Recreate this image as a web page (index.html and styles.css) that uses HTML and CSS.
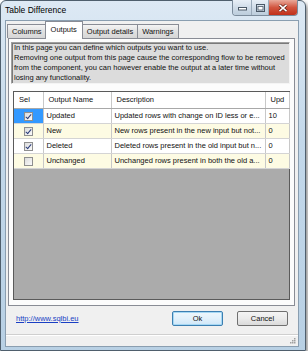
FILE: index.html
```html
<!DOCTYPE html>
<html lang="en">
<head>
    <meta charset="UTF-8">
    <title>Table Difference</title>
    <link rel="stylesheet" href="styles.css">
</head>
<body>
    <div class="window">
        <div class="titlebar">
            <span class="title">Table Difference</span>
            <div class="caption-buttons">
                <span class="cap cap-min">
                    <svg width="9" height="7" viewBox="0 0 9 7"><rect x="0.5" y="3.5" width="8" height="2.5" fill="#fff" stroke="#4a5866"/></svg>
                </span>
                <span class="cap cap-max">
                    <svg width="9" height="8" viewBox="0 0 9 8"><rect x="0.5" y="0.5" width="8" height="7" fill="none" stroke="#4a5866"/><rect x="2" y="2.5" width="5" height="3.5" fill="#fff" stroke="#4a5866" stroke-width="0.8"/></svg>
                </span>
                <span class="cap cap-close">
                    <svg width="10" height="8" viewBox="0 0 10 8"><path d="M1.5 0.8 L8.5 7.2 M8.5 0.8 L1.5 7.2" stroke="#5c1a10" stroke-width="3"/><path d="M1.5 0.8 L8.5 7.2 M8.5 0.8 L1.5 7.2" stroke="#fff" stroke-width="1.6"/></svg>
                </span>
            </div>
        </div>

        <div class="client">
            <div class="tabs">
                <span class="tab">Columns</span>
                <span class="tab active">Outputs</span>
                <span class="tab">Output details</span>
                <span class="tab">Warnings</span>
            </div>

            <div class="panel">
                <div class="info">
                    In this page you can define which outputs you want to use.<br>
                    Removing one output from this page cause the corresponding flow to be removed<br>
                    from the component, you can however enable the output at a later time without<br>
                    losing any functionality.
                </div>

                <div class="grid">
                    <table>
                        <colgroup>
                            <col class="col-sel">
                            <col class="col-name">
                            <col class="col-desc">
                            <col class="col-upd">
                        </colgroup>
                        <tr class="head">
                            <th>Sel</th>
                            <th>Output Name</th>
                            <th>Description</th>
                            <th>Upd</th>
                        </tr>
                        <tr>
                            <td class="sel selected"><span class="check on"></span></td>
                            <td>Updated</td>
                            <td>Updated rows with change on ID less or e...</td>
                            <td>10</td>
                        </tr>
                        <tr class="alt">
                            <td class="sel"><span class="check on"></span></td>
                            <td>New</td>
                            <td>New rows present in the new input but not...</td>
                            <td>0</td>
                        </tr>
                        <tr>
                            <td class="sel"><span class="check on"></span></td>
                            <td>Deleted</td>
                            <td>Deleted rows present in the old input but n...</td>
                            <td>0</td>
                        </tr>
                        <tr class="alt">
                            <td class="sel"><span class="check"></span></td>
                            <td>Unchanged</td>
                            <td>Unchanged rows present in both the old a...</td>
                            <td>0</td>
                        </tr>
                    </table>
                </div>
            </div>

            <div class="actions">
                <a class="link" href="#">http://www.sqlbi.eu</a>
                <button class="btn btn-default">Ok</button>
                <button class="btn">Cancel</button>
            </div>

            <div class="statusbar">
                <svg class="grip" width="7" height="7" viewBox="0 0 7 7">
                    <rect x="5" y="1" width="1.5" height="1.5" fill="#a0a0a0"/>
                    <rect x="3" y="3" width="1.5" height="1.5" fill="#a0a0a0"/>
                    <rect x="5" y="3" width="1.5" height="1.5" fill="#a0a0a0"/>
                    <rect x="1" y="5" width="1.5" height="1.5" fill="#a0a0a0"/>
                    <rect x="3" y="5" width="1.5" height="1.5" fill="#a0a0a0"/>
                    <rect x="5" y="5" width="1.5" height="1.5" fill="#a0a0a0"/>
                </svg>
            </div>
        </div>
    </div>
</body>
</html>
```

FILE: styles.css
```css
*
{
    box-sizing: border-box;
}

body
{
    margin: 0;
    background-color: #ffffff;
    font-family: 'Liberation Sans', Arial, sans-serif;
    font-size: 7.5px;
    color: #111111;
}

.window
{
    width: 306px;
    height: 351px;
    display: flex;
    flex-direction: column;
    padding: 0 6px 3px 4px;
    border: 1px solid #4f5f6d;
    border-radius: 6px 6px 0 0;
    background: linear-gradient(#dde9f4, #c3d8ea 40%, #b8d0e4);
    box-shadow: 2px 3px 4px rgba(0, 0, 0, 0.45);
}

.titlebar
{
    height: 19px;
    display: flex;
    align-items: flex-start;
}

.title
{
    margin-top: 4px;
    font-size: 8.5px;
    color: #000000;
}

.caption-buttons
{
    display: flex;
    margin-left: auto;
    margin-top: -1px;
    margin-right: 1px;
    border: 1px solid #7c8c9c;
    border-top: none;
    border-radius: 0 0 4px 4px;
    overflow: hidden;
}

.cap
{
    height: 15px;
    display: flex;
    align-items: center;
    justify-content: center;
    background: linear-gradient(#e8eff6, #d0dce8 50%, #bccddc);
    border-right: 1px solid #9aaaba;
}

.cap-min
{
    width: 19px;
}

.cap-max
{
    width: 17px;
}

.cap-close
{
    width: 28px;
    border-right: none;
    background: linear-gradient(#e9a99a, #d2553f 50%, #c0301a);
}

.client
{
    flex: 1;
    display: flex;
    flex-direction: column;
    background-color: #f0f0f0;
    border: 1px solid #8a9eb0;
}

.tabs
{
    height: 17px;
    display: flex;
    align-items: flex-end;
    padding-left: 1px;
}

.tab
{
    height: 14px;
    padding: 2px 4px 0 4px;
    border: 1px solid #898c95;
    border-bottom: none;
    margin-right: -1px;
    background: linear-gradient(#f4f4f4, #e0e0e0 50%, #d6d6d6);
}

.tab.active
{
    height: 18px;
    margin: 0 -1px -1px -1px;
    padding-top: 3px;
    padding-left: 5px;
    padding-right: 5px;
    background: #ffffff;
    position: relative;
    z-index: 1;
}

.panel
{
    height: 268px;
    margin: 0 3px 0 2px;
    padding: 3px 4px 5px 2px;
    border: 1px solid #898c95;
    background-color: #fcfcfc;
}

.info
{
    height: 42px;
    padding: 0 2px;
    line-height: 10px;
    white-space: nowrap;
    overflow: hidden;
    background-color: #dcdcdc;
    border: 1px solid #a0a0a0;
    border-right-color: #f4f4f4;
    border-bottom-color: #f4f4f4;
    box-shadow: inset 1px 1px 0 #7a7a7a;
}

.grid
{
    height: 209px;
    margin: 7px 0 0 2px;
    border: 1px solid #5a5a5a;
    background-color: #ababab;
}

table
{
    width: 275px;
    table-layout: fixed;
    border-collapse: collapse;
}

.col-sel
{
    width: 29px;
}

.col-name
{
    width: 68px;
}

.col-desc
{
    width: 154px;
}

.col-upd
{
    width: 24px;
}

th, td
{
    height: 15px;
    padding: 0 0 0 3px;
    text-align: left;
    font-weight: normal;
    white-space: nowrap;
    overflow: hidden;
    background-color: #ffffff;
    border-right: 1px solid #c8c8c8;
    border-bottom: 1px solid #d4d4d4;
}

th
{
    height: 16px;
    padding-left: 5px;
    border-bottom-color: #a8a8a8;
}

.alt td
{
    background-color: #fdfbe3;
}

td.sel
{
    padding: 0;
    text-align: center;
}

td.selected
{
    background-color: #3399ff;
}

.check
{
    display: inline-block;
    width: 9px;
    height: 9px;
    margin-top: 2px;
    border: 1px solid #8f8f8f;
    background: linear-gradient(135deg, #dcdcdc, #fafafa);
    vertical-align: top;
    position: relative;
}

.check.on::after
{
    content: "";
    position: absolute;
    left: 2px;
    top: 0;
    width: 2px;
    height: 5px;
    border: solid #2a3c7a;
    border-width: 0 1.5px 1.5px 0;
    transform: rotate(40deg);
}

.actions
{
    height: 28px;
    display: flex;
    align-items: center;
    padding: 0 10px 3px 10px;
    gap: 14px;
}

.link
{
    margin-right: auto;
    color: #1a3fc4;
    text-decoration: underline;
}

.btn
{
    width: 51px;
    height: 15px;
    padding: 0;
    font-family: inherit;
    font-size: 7.5px;
    color: #111111;
    border: 1px solid #707070;
    border-radius: 2px;
    background: linear-gradient(#f4f4f4, #ebebeb 50%, #dadada);
}

.btn-default
{
    border-color: #3c7fb1;
    background: linear-gradient(#eef7fc, #e2f1fb 50%, #cfe7f8);
    box-shadow: inset 0 0 0 1px #a6d8f4;
}

.statusbar
{
    flex: 1;
    display: flex;
    justify-content: flex-end;
    align-items: flex-end;
    padding: 0 2px 2px 0;
    border-top: 1px solid #cfcfcf;
    box-shadow: inset 0 1px 0 #ffffff;
}
```
